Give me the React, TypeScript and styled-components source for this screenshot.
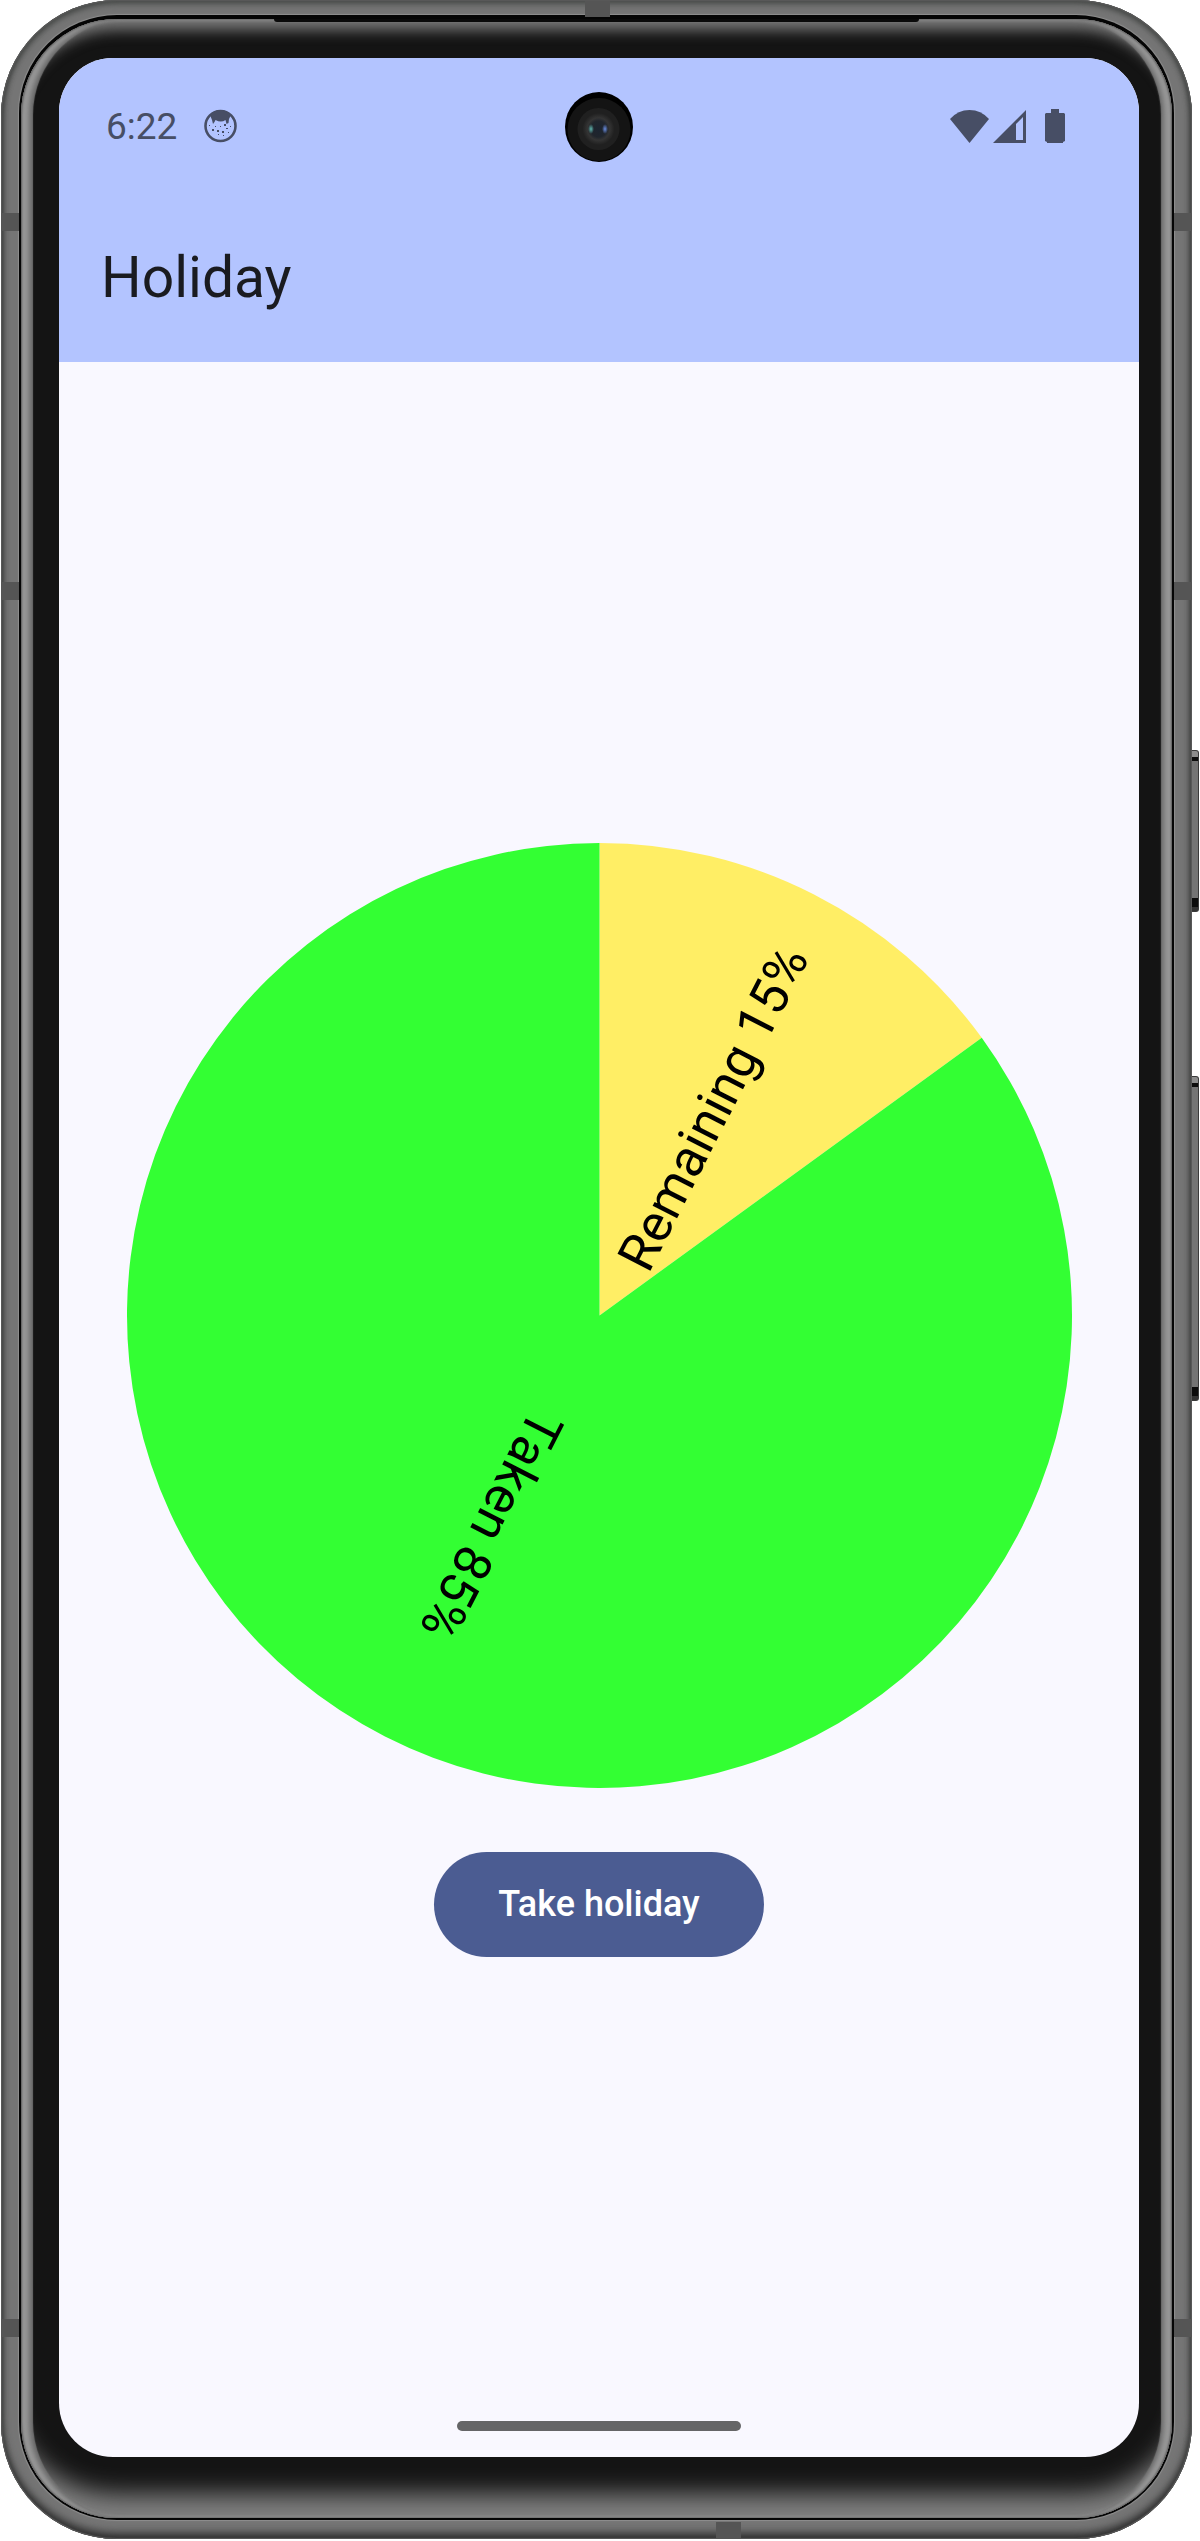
import React from 'react';
import styled, { createGlobalStyle } from 'styled-components';

const GlobalStyle = createGlobalStyle`
  *, *::before, *::after { box-sizing: border-box; }
  html, body { margin: 0; background: #ffffff; }
  body { font-family: Roboto, "Noto Sans", sans-serif; }
`;

const Page = styled.div`
  display: flex;
  min-height: 100vh;
  padding: 0 1px 2px;
`;

const Body = styled.div`
  position: relative;
  flex: 1;
  display: flex;
  min-width: 0;
  padding: 15px 18px 19px;
  border-radius: 116px;
  background: #757575;
  box-shadow:
    inset 0 0 1px 1px #5a5a5a,
    inset 0 4px 6px #4a4d4b,
    inset 0 -6px 8px #303030,
    inset 2px 0 4px #4c4c4c,
    inset -2px 0 4px #4c4c4c;
`;

const Seam = styled.div`
  flex: 1;
  display: flex;
  min-width: 0;
  padding: 4px 2px 2px;
  border-radius: 98px;
  background: #050505;
  box-shadow: 0 0 1px 1px #8f8f8f;
`;

const Glass = styled.div`
  position: relative;
  flex: 1;
  display: flex;
  min-width: 0;
  padding: 39px 33px 61px 38px;
  border-radius: 96px;
  background: #141414;
  box-shadow:
    inset 1px 0 2px #5c5c5c,
    inset -1px 0 2px #5c5c5c,
    inset 8px 0 4px #969696,
    inset -8px 0 4px #969696,
    inset 12px 0 1px #6c6c6c,
    inset -11px 0 1px #6c6c6c,
    inset 0 20px 14px -9px #787878,
    inset 0 -40px 24px -16px #808080;
`;

const Speaker = styled.div`
  position: absolute;
  top: 0;
  left: 22%;
  right: 22%;
  height: 3px;
  background: #0a0a0a;
  border-radius: 0 0 6px 6px;
`;

const SideBand = styled.div<{ $side: 'left' | 'right'; $top: string }>`
  position: absolute;
  ${(p) => p.$side}: 0;
  top: ${(p) => p.$top};
  width: 18px;
  height: 18px;
  background: #555555;
`;

const EdgeBand = styled.div<{ $edge: 'top' | 'bottom'; $left: string }>`
  position: absolute;
  ${(p) => p.$edge}: 1px;
  left: ${(p) => p.$left};
  width: 25px;
  height: 16px;
  background: #555555;
`;

const KeyRail = styled.div`
  display: flex;
  flex-direction: column;
  gap: 164px;
  width: 7px;
  padding-top: 750px;
`;

const Key = styled.div<{ $length: number }>`
  height: ${(p) => p.$length}px;
  border: solid #3a3a3a;
  border-width: 1px 1px 1px 0;
  border-radius: 0 3px 3px 0;
  background: linear-gradient(
    #8c8c8c 0 6px, #0c0c0c 6px 10px, #747474 10px calc(100% - 13px), #0c0c0c calc(100% - 13px) calc(100% - 4px), #333333 0
  );
`;

const Screen = styled.div`
  position: relative;
  flex: 1;
  display: flex;
  flex-direction: column;
  min-width: 0;
  overflow: hidden;
  border-radius: 54px;
  background: #f9f8ff;
`;

const Header = styled.header`
  background: #b3c4ff;
`;

const StatusBar = styled.div`
  display: flex;
  align-items: center;
  justify-content: space-between;
  height: 136px;
  padding: 0 74px 0 47px;
  color: #474e65;
`;

const StatusGroup = styled.div<{ $gap: number }>`
  display: flex;
  align-items: center;
  gap: ${(p) => p.$gap}px;
`;

const Time = styled.span`
  font-size: 37px;
  line-height: 48px;
  padding-top: 2px;
`;

const Camera = styled.div`
  position: absolute;
  top: 34px;
  left: 50%;
  margin-left: -34px;
  line-height: 0;
`;

const AppBar = styled.div`
  display: flex;
  align-items: center;
  height: 168px;
  padding: 0 42px;
`;

const Title = styled.h1`
  margin: 0;
  font-size: 57px;
  font-weight: 400;
  line-height: 72px;
  color: #1a1b20;
`;

const Main = styled.main`
  flex: 1;
  display: flex;
  flex-direction: column;
  align-items: center;
  justify-content: center;
  gap: 64px;
  padding-top: 43px;
`;

const Pie = styled.svg`
  display: block;
  width: 87.5%;
  height: auto;
`;

const PieLabel = styled.text`
  font-size: 52px;
  text-anchor: middle;
  fill: #000000;
`;

const Action = styled.button`
  height: 105px;
  padding: 0 64px;
  border: 0;
  border-radius: 53px;
  background: #4b5c92;
  color: #ffffff;
  font-family: inherit;
  font-size: 36px;
  font-weight: 500;
  line-height: 52px;
  cursor: pointer;
`;

const NavBar = styled.div`
  display: flex;
  align-items: center;
  justify-content: center;
  height: 63px;
`;

const NavPill = styled.div`
  width: 284px;
  height: 10px;
  border-radius: 5px;
  background: #656567;
`;

const SLICES = [
  { label: 'Remaining', percent: 15, color: '#ffee65', baseline: 25 },
  { label: 'Taken', percent: 85, color: '#33ff33', baseline: 19 },
];

const RADIUS = 472;

function rim(percent: number) {
  const a = (percent / 100) * Math.PI * 2;
  return `${RADIUS * Math.sin(a)} ${-RADIUS * Math.cos(a)}`;
}

function HolidayPie() {
  let start = 0;
  const slices = SLICES.map((s) => {
    const from = start;
    start += s.percent;
    return { ...s, from, to: start, angle: (from + s.percent / 2) * 3.6 - 90 };
  });
  return (
    <Pie viewBox="-472 -472 944 944" role="img" aria-label="Holiday taken and remaining">
      {slices.map((s) => (
        <path
          key={s.label}
          fill={s.color}
          d={`M0 0L${rim(s.from)}A${RADIUS} ${RADIUS} 0 ${s.percent > 50 ? 1 : 0} 1 ${rim(s.to)}Z`}
        />
      ))}
      {slices.map((s) => (
        <PieLabel key={s.label} x={RADIUS / 2} y={s.baseline} transform={`rotate(${s.angle})`}>
          {`${s.label} ${s.percent}%`}
        </PieLabel>
      ))}
    </Pie>
  );
}

const FaceIcon = () => (
  <svg width="33" height="34" viewBox="0 0 33 34" aria-hidden="true">
    <circle cx="16.5" cy="17" r="15" fill="none" stroke="currentColor" strokeWidth="2.6" />
    <path
      fill="currentColor"
      d="M6 6Q10 1 16.500 1T27 6L25 10L24.500 14L22.500 15L21.500 11Q17 14 11.500 11L10.500 13L9 15L8 11Z"
    />
    <g fill="currentColor">
      <rect x="8" y="20" width="2" height="2" />
      <rect x="13" y="21" width="2" height="2" />
      <rect x="18" y="22" width="2" height="2" />
      <rect x="20" y="15" width="2" height="2" />
      <rect x="22" y="19" width="2" height="1" />
      <rect x="16" y="17" width="1" height="1" />
      <rect x="11" y="17" width="1" height="1" />
      <rect x="26" y="17" width="1" height="1" />
      <rect x="14" y="25" width="1" height="1" />
      <rect x="19" y="26" width="1" height="1" />
      <rect x="24" y="23" width="1" height="1" />
      <rect x="5" y="16" width="1" height="1" />
    </g>
  </svg>
);

const WifiIcon = () => (
  <svg width="39" height="33" viewBox="0 0 39 33" aria-hidden="true">
    <path fill="currentColor" d="M0 9Q8 0 19.500 0T39 9L19.500 33Z" />
  </svg>
);

const SignalIcon = () => (
  <svg width="33" height="33" viewBox="0 0 33 33" aria-hidden="true">
    <path fill="currentColor" fillRule="evenodd" d="M33 0V33H0ZM30 7L23 14V30H30Z" />
  </svg>
);

const BatteryIcon = () => (
  <svg width="20" height="34" viewBox="0 0 20 34" aria-hidden="true">
    <path fill="currentColor" d="M6 0H14V4H19L20 5V32L18 33V34H2V33L0 32V5L1 4H6Z" />
  </svg>
);

const CameraLens = () => (
  <svg width="68" height="70" viewBox="0 0 68 70" aria-hidden="true">
    <defs>
      <radialGradient id="ring">
        <stop offset="0" stopColor="#1c2430" />
        <stop offset="0.5" stopColor="#20252c" />
        <stop offset="0.7" stopColor="#343434" />
        <stop offset="1" stopColor="#202020" />
      </radialGradient>
      <radialGradient id="teal">
        <stop offset="0" stopColor="#5fb5ae" />
        <stop offset="1" stopColor="#5fb5ae" stopOpacity="0" />
      </radialGradient>
      <radialGradient id="blue">
        <stop offset="0" stopColor="#6a8de0" />
        <stop offset="1" stopColor="#6a8de0" stopOpacity="0" />
      </radialGradient>
    </defs>
    <ellipse cx="34" cy="35" rx="34" ry="35" fill="#000000" />
    <circle cx="34" cy="37.500" r="31.500" fill="#141414" />
    <circle cx="33.500" cy="37" r="21" fill="#202020" />
    <circle cx="33.500" cy="37" r="16" fill="url(#ring)" />
    <ellipse cx="26" cy="37" rx="3" ry="5" fill="url(#teal)" />
    <ellipse cx="40" cy="37" rx="3" ry="5" fill="url(#blue)" />
  </svg>
);

export default function App() {
  return (
    <>
      <GlobalStyle />
      <Page>
        <Body>
          <Seam>
            <Glass>
              <Speaker />
              <Screen>
                <Header>
                  <StatusBar>
                    <StatusGroup $gap={27}>
                      <Time>6:22</Time>
                      <FaceIcon />
                    </StatusGroup>
                    <StatusGroup $gap={19}>
                      <StatusGroup $gap={4}>
                        <WifiIcon />
                        <SignalIcon />
                      </StatusGroup>
                      <BatteryIcon />
                    </StatusGroup>
                  </StatusBar>
                  <AppBar>
                    <Title>Holiday</Title>
                  </AppBar>
                </Header>
                <Camera>
                  <CameraLens />
                </Camera>
                <Main>
                  <HolidayPie />
                  <Action type="button">Take holiday</Action>
                </Main>
                <NavBar>
                  <NavPill />
                </NavBar>
              </Screen>
            </Glass>
          </Seam>
          <SideBand $side="left" $top="213px" />
          <SideBand $side="right" $top="213px" />
          <SideBand $side="left" $top="582px" />
          <SideBand $side="right" $top="582px" />
          <SideBand $side="left" $top="2319px" />
          <SideBand $side="right" $top="2319px" />
          <EdgeBand $edge="top" $left="49%" />
          <EdgeBand $edge="bottom" $left="60%" />
        </Body>
        <KeyRail>
          <Key $length={162} />
          <Key $length={325} />
        </KeyRail>
      </Page>
    </>
  );
}
